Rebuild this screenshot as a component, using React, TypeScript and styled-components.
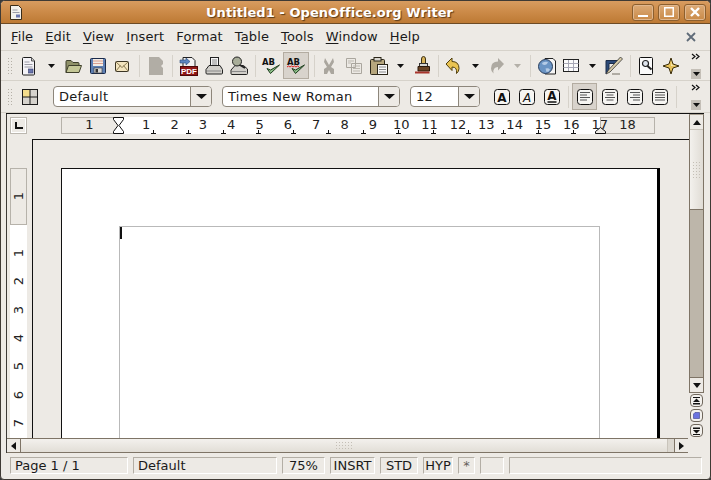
import React from 'react';
import styled, { createGlobalStyle } from 'styled-components';

const GlobalStyle = createGlobalStyle`
  html, body { margin: 0; padding: 0; background: #3a3a3a; overflow: hidden; }
  * { box-sizing: border-box; }
`;

const Window = styled.div`
  width: 711px;
  height: 480px;
  display: flex;
  flex-direction: column;
  background: #edeae5;
  border: 1px solid #3f3a34;
  border-radius: 5px 5px 4px 4px;
  overflow: hidden;
  font-family: 'DejaVu Sans', sans-serif;
  font-size: 13px;
  color: #1a1a1a;
`;

const TitleBar = styled.div`
  height: 23px;
  flex: none;
  display: flex;
  align-items: center;
  padding: 0 4px 0 8px;
  background: linear-gradient(#d89c60, #cd8c4a 45%, #bd7a34);
  border-bottom: 1px solid #6d4b25;
`;

const TitleText = styled.div`
  flex: 1;
  text-align: center;
  padding-left: 4px;
  font-weight: bold;
  font-size: 13px;
  letter-spacing: 0.06px;
  color: #fff;
  text-shadow: 1px 1px 1px #5a3a18;
  white-space: nowrap;
`;

const TitleButtons = styled.div`
  display: flex;
  gap: 4px;
`;

const TitleButton = styled.div`
  width: 22px;
  height: 17px;
  display: flex;
  align-items: center;
  justify-content: center;
  border: 1px solid #8c5f2e;
  border-radius: 3px;
  background: linear-gradient(#dcaa76, #c98a48);
  box-shadow: inset 0 0 0 1px #e0b78e;
`;

const MenuBar = styled.div`
  height: 27px;
  flex: none;
  display: flex;
  align-items: center;
  padding: 0 14px 1px 4px;
  border-bottom: 1px solid #d6d2ca;
`;

const MenuItem = styled.div`
  padding: 0 6px;
  letter-spacing: 0.12px;
  white-space: nowrap;
  u { text-underline-offset: 2px; }
`;

const MenuClose = styled.div`
  margin-left: auto;
  display: flex;
`;

const ToolBar = styled.div<{ $h: number }>`
  height: ${(p) => p.$h}px;
  flex: none;
  display: flex;
  align-items: center;
  padding-left: 6px;
  border-bottom: 1px solid #d6d2ca;
`;

const Grip = styled.div<{ $after: number }>`
  width: 6px;
  height: 18px;
  flex: none;
  margin-right: ${(p) => p.$after}px;
  background-image: radial-gradient(#b5b0a7 0.8px, transparent 0.9px);
  background-size: 3px 3px;
`;

const Slot = styled.div<{ $w: number; $active?: boolean }>`
  width: ${(p) => p.$w}px;
  height: 27px;
  flex: none;
  display: flex;
  align-items: center;
  justify-content: center;
  ${(p) => p.$active && 'background: #d8d3cc; border: 1px solid #b3aca1;'}
`;

const Separator = styled.div<{ $w: number }>`
  width: ${(p) => p.$w}px;
  height: 22px;
  flex: none;
  display: flex;
  justify-content: center;
  &::after {
    content: '';
    width: 1px;
    background: #d6d2ca;
  }
`;

const Overflow = styled.div`
  margin-left: auto;
  margin-right: 9px;
  width: 10px;
  height: 26px;
  flex: none;
  display: flex;
  flex-direction: column;
  justify-content: space-between;
  font-size: 0;
`;

const OverflowBottom = styled.div`
  height: 10px;
  display: flex;
  align-items: center;
  justify-content: center;
  background: #c4bfb7;
`;

const Combo = styled.div<{ $w: number; $before: number }>`
  width: ${(p) => p.$w}px;
  height: 21px;
  flex: none;
  margin-left: ${(p) => p.$before}px;
  display: flex;
  background: #fff;
  border: 1px solid #8d867b;
  border-radius: 4px;
  overflow: hidden;
`;

const ComboText = styled.div`
  flex: 1;
  padding: 2px 0 0 5px;
  letter-spacing: 0.02em;
  white-space: nowrap;
`;

const ComboButton = styled.div`
  width: 21px;
  flex: none;
  display: flex;
  align-items: center;
  justify-content: center;
  background: #edeae5;
  border-left: 1px solid #8d867b;
`;

const Workspace = styled.div`
  flex: 1;
  min-height: 0;
  display: flex;
  margin: 0 6px 0 5px;
  border-top: 1px solid #111;
`;

const MainColumn = styled.div`
  width: 683px;
  flex: none;
  display: flex;
  flex-direction: column;
  border-left: 1px solid #3d3a36;
`;

const RulerRow = styled.div`
  height: 25px;
  flex: none;
  display: flex;
  padding: 3px 0 0 3px;
`;

const CornerBox = styled.div`
  width: 17px;
  height: 17px;
  margin-right: 34px;
  display: flex;
  align-items: center;
  justify-content: center;
  border: 1px solid #bcb8b0;
  box-shadow: inset 0 0 0 1px #fff;
`;

const Ruler = styled.div`
  position: relative;
  width: 594px;
  height: 17px;
  display: flex;
  color: #222;
`;

const RulerGray = styled.div<{ $w: number }>`
  width: ${(p) => p.$w}px;
  flex: none;
  text-align: center;
  line-height: 14px;
  border: 1px solid #b6b2aa;
`;

const RulerWhite = styled.div`
  width: 482px;
  flex: none;
  display: flex;
  padding-left: 14px;
  background: #fff;
  line-height: 15px;
`;

const RulerNum = styled.div`
  width: 28.35px;
  flex: none;
  text-align: center;
`;

const TickLayer = styled.div`
  position: absolute;
  left: 57px;
  bottom: 0;
  display: flex;
  padding-left: 32px;
`;

const Tick = styled.div`
  position: relative;
  width: 35px;
  height: 4px;
  flex: none;
  &::before {
    content: '';
    position: absolute;
    left: 3px;
    top: 0;
    width: 1px;
    height: 4px;
    background: #111;
  }
  &::after {
    content: '';
    position: absolute;
    left: 1px;
    bottom: 0;
    width: 5px;
    height: 1px;
    background: #111;
  }
`;

const IndentLeft = styled.svg`
  position: absolute;
  left: 52px;
  top: 0;
`;

const IndentRight = styled.svg`
  position: absolute;
  left: 534px;
  top: 10px;
`;

const Body = styled.div`
  flex: 1;
  min-height: 0;
  display: flex;
  padding-left: 3px;
  overflow: hidden;
`;

const VRuler = styled.div`
  width: 17px;
  flex: none;
  margin-top: 29px;
  margin-right: 5px;
  background: #fff;
  color: #222;
`;

const VRulerGray = styled.div`
  height: 57px;
  display: flex;
  align-items: center;
  justify-content: center;
  background: #edeae5;
  border: 1px solid #b6b2aa;
`;

const VRulerNumbers = styled.div`
  padding-top: 14px;
`;

const VRulerNum = styled.div`
  height: 28.35px;
  display: flex;
  align-items: center;
  justify-content: center;
`;

const Rotated = styled.span`
  writing-mode: vertical-rl;
  transform: rotate(180deg);
  line-height: 15px;
`;

const DocFrame = styled.div`
  flex: 1;
  padding: 28px 0 0 28px;
  border-top: 1px solid #111;
  border-left: 1px solid #111;
`;

const Page = styled.div`
  width: 599px;
  height: 400px;
  padding: 57px 0 0 57px;
  background: #fff;
  border-top: 1px solid #111;
  border-left: 1px solid #111;
  border-right: 3px solid #000;
`;

const MarginBox = styled.div`
  width: 481px;
  height: 340px;
  border: 1px solid #b9b9b9;
`;

const Caret = styled.div`
  width: 2px;
  height: 12px;
  background: #111;
`;

const HScroll = styled.div`
  height: 15px;
  flex: none;
  display: flex;
  border-top: 1px solid #7e7466;
  border-bottom: 1px solid #7e7466;
  margin-right: 1px;
`;

const ScrollButton = styled.div`
  width: 14px;
  flex: none;
  display: flex;
  align-items: center;
  justify-content: center;
  background: #edeae5;
  border-right: 1px solid #7e7466;
`;

const ScrollButtonEnd = styled(ScrollButton)`
  border-right: 0;
  border-left: 1px solid #7e7466;
`;

const HThumb = styled.div`
  flex: 1;
  display: flex;
  align-items: center;
  justify-content: center;
  background: linear-gradient(#f3f1ed, #e2ded7);
  border-right: 1px solid #c9c4bb;
`;

const HTrackEnd = styled.div`
  width: 6px;
  flex: none;
  background: #dcd8d0;
`;

const Dots = styled.div<{ $w: number; $h: number }>`
  width: ${(p) => p.$w}px;
  height: ${(p) => p.$h}px;
  background-image: radial-gradient(#c4bfb6 0.7px, transparent 0.8px);
  background-size: 3px 3px;
`;

const VScroll = styled.div`
  width: 15px;
  flex: none;
  display: flex;
  flex-direction: column;
`;

const VScrollBar = styled.div`
  height: 279px;
  flex: none;
  display: flex;
  flex-direction: column;
  border: 1px solid #7e7466;
  border-top-color: #a79e90;
`;

const VButton = styled.div`
  height: 14px;
  flex: none;
  display: flex;
  align-items: center;
  justify-content: center;
  background: #edeae5;
`;

const VThumb = styled.div`
  height: 81px;
  flex: none;
  display: flex;
  align-items: center;
  justify-content: center;
  background: linear-gradient(90deg, #f3f1ed, #e0dcd5);
  border-top: 1px solid #c9c4bb;
  border-bottom: 1px solid #7e7466;
`;

const VTrough = styled.div`
  flex: 1;
  background: #bdb6aa;
  border-bottom: 1px solid #7e7466;
`;

const NavButtons = styled.div`
  display: flex;
  flex-direction: column;
  gap: 2px;
  margin: 1px 0 0 1px;
`;

const NavButton = styled.div`
  width: 13px;
  height: 13px;
  display: flex;
  align-items: center;
  justify-content: center;
  border: 1px solid #6f675c;
  border-radius: 4px;
  background: #f3f1ed;
`;

const StatusBar = styled.div`
  height: 26px;
  flex: none;
  display: flex;
  gap: 5px;
  padding: 4px 0 0 9px;
`;

const StatusCell = styled.div<{ $w: number; $center?: boolean }>`
  width: ${(p) => p.$w}px;
  height: 17px;
  flex: none;
  padding-left: ${(p) => (p.$center ? 0 : 4)}px;
  text-align: ${(p) => (p.$center ? 'center' : 'left')};
  line-height: 15px;
  white-space: nowrap;
  border: 1px solid;
  border-color: #b3aea5 #fff #fff #b3aea5;
`;

const StatusMark = styled.span`
  color: #66625b;
`;

const Svg = styled.svg`
  display: block;
  flex: none;
`;

const Arrow = ({ color = '#111' }: { color?: string }) => (
  <Svg width="7" height="4" viewBox="0 0 7 4">
    <path d="M0 0h7L3.500 4z" fill={color} />
  </Svg>
);

const ComboArrow = () => (
  <Svg width="11" height="5" viewBox="0 0 11 5">
    <path d="M0 0h11L5.500 5z" fill="#111" />
  </Svg>
);

const Icon = ({ children }: { children: React.ReactNode }) => (
  <Svg width="22" height="22" viewBox="0 0 22 22">
    {children}
  </Svg>
);

const NewDoc = () => (
  <Icon>
    <path d="M5.500 2.500h8l3 3.500v13q0 1-1 1h-10q-1 0-1-1v-15.500q0-1 1-1z" fill="#f4f3f7" stroke="#1d1d1d" />
    <path d="M13.500 2.500v3.500h3" fill="#ccc" stroke="#555" />
    <path d="M6.500 7h5M6.500 9.500h8M6.500 12h8" stroke="#9a9aa5" />
    <rect x="10.500" y="14" width="4.500" height="4" fill="#6a76ad" stroke="#333a6a" strokeWidth=".6" />
  </Icon>
);

const OpenFolder = () => (
  <Icon>
    <path d="M4 17.500V6.500q0-1 1-1h4l2 2h5q1 0 1 1v2" fill="#8f9168" stroke="#3e3f2b" />
    <path d="M4 17.500l2.500-7h13l-2.500 7z" fill="#c4c796" stroke="#3e3f2b" strokeLinejoin="round" />
  </Icon>
);

const Save = () => (
  <Icon>
    <rect x="3.500" y="3.500" width="15" height="15" rx="1" fill="#5d7fb3" stroke="#1a2a4a" />
    <rect x="6" y="4" width="10" height="7" fill="#f4ece4" />
    <path d="M6 6h10M6 8.500h10" stroke="#d0806c" strokeWidth=".7" />
    <rect x="7" y="13" width="8" height="5" fill="#d7d7d7" stroke="#333" strokeWidth=".6" />
    <rect x="8.500" y="14" width="2.500" height="3.500" fill="#333" />
  </Icon>
);

const Mail = () => (
  <Icon>
    <rect x="4.500" y="6.500" width="13" height="10" rx="1" fill="#f3e5bf" stroke="#3b3524" />
    <path d="M5 7l6 5.500L17 7M5 16l4.500-5.500M17 16l-4.500-5.500" fill="none" stroke="#8a7a52" />
  </Icon>
);

const DisabledDoc = () => (
  <Icon>
    <path d="M4 2h10l4 4v3l-2 2 2 2v7H4z" fill="#b1ada5" />
  </Icon>
);

const PdfDoc = () => (
  <Icon>
    <path d="M5 2.500h9l3 3v6H5z" fill="#f3f3f3" stroke="#222" />
    <path d="M2 5h6V3l4 3.500L8 10V8H2z" fill="#5d86c0" stroke="#2a4a7a" strokeWidth=".6" />
    <rect x="2.500" y="11.500" width="17" height="9" fill="#8f1616" stroke="#4c0808" />
    <text x="11" y="18.800" textAnchor="middle" fontFamily="'Liberation Sans', sans-serif" fontSize="8" fontWeight="700" fill="#fff">PDF</text>
  </Icon>
);

const Printer = () => (
  <Icon>
    <rect x="7.500" y="2.500" width="8" height="9" fill="#f5f5f5" stroke="#222" />
    <path d="M9 5h5M9 7h5M9 9h5" stroke="#888" />
    <path d="M6 10.500h11l2.500 4v3.500q0 1-1 1H4q-1 0-1-1v-3.500z" fill="#d0cec9" stroke="#222" />
    <path d="M4 16h14" stroke="#888" />
  </Icon>
);

const PrintPreview = () => (
  <Icon>
    <path d="M7 10.500h8.500l4 3.500v4.500q0 1-1 1H4q-1 0-1-1v-3.500z" fill="#d0cec9" stroke="#222" />
    <path d="M4 16.500h14" stroke="#888" />
    <circle cx="9" cy="6.500" r="4.500" fill="#a8ad99" stroke="#222" />
    <path d="M12 10l5 3" stroke="#222" strokeWidth="2" />
  </Icon>
);

const Spell = ({ wavy }: { wavy?: boolean }) => (
  <Icon>
    <text x="2" y="9.500" fontFamily="'DejaVu Sans', sans-serif" fontSize="8.500" fontWeight="700" fill="#111">AB</text>
    {wavy && <path d="M2 12l1.500-1 1.500 1 1.500-1 1.500 1 1.500-1 1.500 1 1.500-1 1.500 1" fill="none" stroke="#d22" />}
    <path d="M7 13.500l3.500 5L19.500 10l-9 5z" fill="#8fc08a" stroke="#1c3c1c" strokeLinejoin="round" />
  </Icon>
);

const Cut = () => (
  <Icon>
    <path d="M7 3l4 7 4-7 1 4-3 5 3 2v5h-3l-2-4-2 4H6v-5l3-2-3-5z" fill="#aaa69e" />
  </Icon>
);

const Copy = () => (
  <Icon>
    <path d="M3.500 3.500h9v9h-9zM8.500 8.500h10v10h-10z" fill="#ece9e4" stroke="#aaa69e" />
    <path d="M5 6h6M5 8h3M10 11h7M10 13.500h7M10 16h7" stroke="#bdb9b1" />
  </Icon>
);

const Paste = () => (
  <Icon>
    <rect x="2.500" y="4.500" width="14" height="15" rx="1" fill="#b6a67d" stroke="#2b2619" />
    <rect x="6" y="2.500" width="7" height="3.500" fill="#d8d6cf" stroke="#2b2619" />
    <rect x="9.500" y="9.500" width="10" height="10" fill="#f8f8f8" stroke="#2b2619" />
    <path d="M11 12h7M11 14.500h7M11 17h7" stroke="#888" />
  </Icon>
);

const Brush = () => (
  <Icon>
    <path d="M9.500 9V4q0-2.500 2-2.500t2 2.500v5z" fill="#d9b45a" stroke="#3b2f10" />
    <rect x="7.500" y="8.500" width="8" height="3" fill="#d7d7d2" stroke="#333" />
    <path d="M6 11.500h11.500v4.500H6z" fill="#6a4526" stroke="#2c1a0c" />
    <path d="M3 17.500h14.500" stroke="#a8352c" strokeWidth="2" />
  </Icon>
);

const UndoArrow = () => (
  <Icon>
    <path d="M4 9l6-6v3.500q7 0 7 7 0 3-2.500 5 1-6.500-4.500-6.500v3.500z" fill="#e9c352" stroke="#4f3e0c" strokeLinejoin="round" />
  </Icon>
);

const RedoArrow = () => (
  <Icon>
    <path d="M18 9l-6-6v3.500q-7 0-7 7 0 3 2.500 5-1-6.500 4.500-6.500v3.500z" fill="#aeaaa2" />
  </Icon>
);

const Globe = () => (
  <Icon>
    <path d="M9 3.500h8l2.500 2.500v13H9z" fill="#f5f5f5" stroke="#222" />
    <circle cx="9.500" cy="11.500" r="7" fill="#6a94c4" stroke="#2a3f5e" />
    <path d="M6 8q3-2 6-1-1 3-3.500 3T6 8zM9.500 13.500q3-1 4.500 1-1 2.500-3.500 2.500z" fill="#b4cbe6" />
  </Icon>
);

const TableGrid = () => (
  <Icon>
    <rect x="3.500" y="4.500" width="15" height="12" fill="#fbfbfb" stroke="#222" />
    <path d="M3.500 8.500h15M3.500 12.500h15M8.500 5v11M13.500 5v11" stroke="#a7a7b5" />
  </Icon>
);

const DrawPencil = () => (
  <Icon>
    <path d="M3 5.500h13l-1 3H6v7l-3 3z" fill="#2c4a78" stroke="#1b2c48" />
    <path d="M3 19l4-2L19.500 4l-2-2L5.500 15z" fill="#d6cba8" stroke="#333" strokeWidth=".8" />
    <path d="M9 19h8" stroke="#b0aca4" strokeWidth="2" />
  </Icon>
);

const FindDoc = () => (
  <Icon>
    <rect x="4.500" y="2.500" width="13" height="17" rx="1" fill="#fafafa" stroke="#111" />
    <circle cx="10.500" cy="8.500" r="3" fill="#dfe5ee" stroke="#222" strokeWidth="1.200" />
    <path d="M12.500 11l4 3.500" stroke="#222" strokeWidth="2" />
  </Icon>
);

const NavigatorStar = () => (
  <Icon>
    <path d="M11 3l2 6 6 2-6 2-2 6-2-6-6-2 6-2z" fill="#e8c25a" stroke="#3a2d0a" strokeLinejoin="round" />
    <path d="M11 6l1 4 4 1-5 0z" fill="#f7e8b0" />
  </Icon>
);

const StylesGrid = () => (
  <Icon>
    <rect x="3.500" y="3.500" width="15" height="15" fill="#d6d3cd" stroke="#1b1b1b" />
    <rect x="4" y="4" width="7" height="7" fill="#f4dd8c" />
    <path d="M11 3.500v15M3.500 11h15" stroke="#1b1b1b" />
  </Icon>
);

const LetterStyled = styled.text<{ $weight: number; $italic?: boolean }>`
  font-family: 'DejaVu Sans', sans-serif;
  font-size: 12px;
  font-weight: ${(p) => p.$weight};
  font-style: ${(p) => (p.$italic ? 'italic' : 'normal')};
  fill: #111;
`;

const LetterButton = ({ weight, italic, under }: { weight: number; italic?: boolean; under?: boolean }) => (
  <Icon>
    <rect x="3.500" y="3.500" width="15" height="15" rx="3" fill="#f6f5f2" stroke="#111" />
    <LetterStyled x="11" y={under ? 14 : 15.500} textAnchor="middle" $weight={weight} $italic={italic}>A</LetterStyled>
    {under && <path d="M6.500 16h9" stroke="#111" strokeWidth="1.300" />}
  </Icon>
);

const AlignButton = ({ lines }: { lines: string }) => (
  <Icon>
    <rect x="3.500" y="3.500" width="15" height="15" rx="3" fill="#f6f5f2" stroke="#111" />
    <path d={lines} stroke="#555" fill="none" />
  </Icon>
);

const tabTicks = Array.from({ length: 13 }, (_, i) => i);
const hNumbers = Array.from({ length: 17 }, (_, i) => i + 1);
const vNumbers = [1, 2, 3, 4, 5, 6, 7];

const OverflowMark = () => (
  <>
    <Svg width="10" height="7" viewBox="0 0 10 7">
      <path d="M1 1l3 2.500L1 6M5 1l3 2.500L5 6" fill="none" stroke="#111" strokeWidth="1.200" />
    </Svg>
    <OverflowBottom>
      <Arrow />
    </OverflowBottom>
  </>
);

const App = () => (
  <>
    <GlobalStyle />
    <Window>
      <TitleBar>
        <Svg width="14" height="17" viewBox="0 0 14 17">
          <path d="M1.500 1.500h8l3 3v11h-11z" fill="#f3f1ec" stroke="#3a2c18" />
          <path d="M3.500 6h5M3.500 8.500h7" stroke="#9a9aa5" />
          <rect x="7" y="10.500" width="4" height="3" fill="#6a76ad" />
        </Svg>
        <TitleText>Untitled1 - OpenOffice.org Writer</TitleText>
        <TitleButtons>
          <TitleButton>
            <Svg width="10" height="10" viewBox="0 0 10 10"><path d="M0 8h10v2H0z" fill="#fff" /></Svg>
          </TitleButton>
          <TitleButton>
            <Svg width="10" height="10" viewBox="0 0 10 10"><rect x=".75" y=".75" width="8.500" height="8.500" fill="none" stroke="#fff" strokeWidth="1.500" /></Svg>
          </TitleButton>
          <TitleButton>
            <Svg width="10" height="10" viewBox="0 0 10 10"><path d="M1 1l8 8M9 1l-8 8" stroke="#fff" strokeWidth="2.400" /></Svg>
          </TitleButton>
        </TitleButtons>
      </TitleBar>

      <MenuBar>
        <MenuItem><u>F</u>ile</MenuItem>
        <MenuItem><u>E</u>dit</MenuItem>
        <MenuItem><u>V</u>iew</MenuItem>
        <MenuItem><u>I</u>nsert</MenuItem>
        <MenuItem>F<u>o</u>rmat</MenuItem>
        <MenuItem>T<u>a</u>ble</MenuItem>
        <MenuItem><u>T</u>ools</MenuItem>
        <MenuItem><u>W</u>indow</MenuItem>
        <MenuItem><u>H</u>elp</MenuItem>
        <MenuClose>
          <Svg width="10" height="10" viewBox="0 0 10 10">
            <path d="M1 1l8 8M9 1l-8 8" stroke="#5f6b78" strokeWidth="1.800" />
          </Svg>
        </MenuClose>
      </MenuBar>

      <ToolBar $h={30}>
        <Grip $after={4} />
        <Slot $w={24}><NewDoc /></Slot>
        <Slot $w={20}><Arrow /></Slot>
        <Slot $w={24}><OpenFolder /></Slot>
        <Slot $w={26}><Save /></Slot>
        <Slot $w={22}><Mail /></Slot>
        <Separator $w={12} />
        <Slot $w={22}><DisabledDoc /></Slot>
        <Separator $w={10} />
        <Slot $w={24}><PdfDoc /></Slot>
        <Slot $w={26}><Printer /></Slot>
        <Slot $w={24}><PrintPreview /></Slot>
        <Separator $w={8} />
        <Slot $w={24}><Spell /></Slot>
        <Slot $w={26} $active><Spell wavy /></Slot>
        <Separator $w={10} />
        <Slot $w={20}><Cut /></Slot>
        <Slot $w={30}><Copy /></Slot>
        <Slot $w={20}><Paste /></Slot>
        <Slot $w={22}><Arrow /></Slot>
        <Slot $w={24}><Brush /></Slot>
        <Separator $w={6} />
        <Slot $w={24}><UndoArrow /></Slot>
        <Slot $w={20}><Arrow /></Slot>
        <Slot $w={24}><RedoArrow /></Slot>
        <Slot $w={16}><Arrow color="#b4b0a8" /></Slot>
        <Separator $w={10} />
        <Slot $w={24}><Globe /></Slot>
        <Slot $w={24}><TableGrid /></Slot>
        <Slot $w={18}><Arrow /></Slot>
        <Slot $w={26}><DrawPencil /></Slot>
        <Separator $w={6} />
        <Slot $w={26}><FindDoc /></Slot>
        <Slot $w={24}><NavigatorStar /></Slot>
        <Overflow><OverflowMark /></Overflow>
      </ToolBar>

      <ToolBar $h={32}>
        <Grip $after={5} />
        <Slot $w={24}><StylesGrid /></Slot>
        <Combo $w={159} $before={11}>
          <ComboText>Default</ComboText>
          <ComboButton><ComboArrow /></ComboButton>
        </Combo>
        <Combo $w={178} $before={10}>
          <ComboText>Times New Roman</ComboText>
          <ComboButton><ComboArrow /></ComboButton>
        </Combo>
        <Combo $w={70} $before={10}>
          <ComboText>12</ComboText>
          <ComboButton><ComboArrow /></ComboButton>
        </Combo>
        <Slot $w={9} />
        <Slot $w={25}><LetterButton weight={700} /></Slot>
        <Slot $w={25}><LetterButton weight={400} italic /></Slot>
        <Slot $w={25}><LetterButton weight={700} under /></Slot>
        <Separator $w={8} />
        <Slot $w={25} $active>
          <AlignButton lines="M6 6.500h10M6 9h7M6 11.500h10M6 14h7" />
        </Slot>
        <Slot $w={25}><AlignButton lines="M6 6.500h10M7.500 9h7M6 11.500h10M7.500 14h7" /></Slot>
        <Slot $w={25}><AlignButton lines="M6 6.500h10M9 9h7M6 11.500h10M9 14h7" /></Slot>
        <Slot $w={25}><AlignButton lines="M6 6.500h10M6 9h10M6 11.500h10M6 14h10" /></Slot>
        <Separator $w={8} />
        <Overflow><OverflowMark /></Overflow>
      </ToolBar>

      <Workspace>
        <MainColumn>
          <RulerRow>
            <CornerBox>
              <Svg width="8" height="7" viewBox="0 0 8 7"><path d="M0 0h2v5h6v2H0z" fill="#111" /></Svg>
            </CornerBox>
            <Ruler>
              <RulerGray $w={57}>1</RulerGray>
              <RulerWhite>
                {hNumbers.map((n) => (
                  <RulerNum key={n}>{n}</RulerNum>
                ))}
              </RulerWhite>
              <RulerGray $w={55}>18</RulerGray>
              <TickLayer>
                {tabTicks.map((n) => (
                  <Tick key={n} />
                ))}
              </TickLayer>
              <IndentLeft width="11" height="17" viewBox="0 0 11 17">
                <path d="M.5.500h10v2L6 8.500l4.500 6v2H.500v-2L5 8.500.500 2.500z" fill="#fff" stroke="#111" />
              </IndentLeft>
              <IndentRight width="11" height="7" viewBox="0 0 11 7">
                <path d="M5.500.500l5 4v2H.500v-2z" fill="#edeae5" stroke="#111" />
              </IndentRight>
            </Ruler>
          </RulerRow>

          <Body>
            <VRuler>
              <VRulerGray><Rotated>1</Rotated></VRulerGray>
              <VRulerNumbers>
                {vNumbers.map((n) => (
                  <VRulerNum key={n}><Rotated>{n}</Rotated></VRulerNum>
                ))}
              </VRulerNumbers>
            </VRuler>
            <DocFrame>
              <Page>
                <MarginBox>
                  <Caret />
                </MarginBox>
              </Page>
            </DocFrame>
          </Body>

          <HScroll>
            <ScrollButton>
              <Svg width="5" height="8" viewBox="0 0 5 8"><path d="M5 0v8L0 4z" fill="#111" /></Svg>
            </ScrollButton>
            <HThumb><Dots $w={18} $h={9} /></HThumb>
            <HTrackEnd />
            <ScrollButtonEnd>
              <Svg width="5" height="8" viewBox="0 0 5 8"><path d="M0 0v8l5-4z" fill="#111" /></Svg>
            </ScrollButtonEnd>
          </HScroll>
        </MainColumn>

        <VScroll>
          <VScrollBar>
            <VButton>
              <Svg width="8" height="5" viewBox="0 0 8 5"><path d="M0 5h8L4 0z" fill="#111" /></Svg>
            </VButton>
            <VThumb><Dots $w={9} $h={18} /></VThumb>
            <VTrough />
            <VButton>
              <Svg width="8" height="5" viewBox="0 0 8 5"><path d="M0 0h8L4 5z" fill="#111" /></Svg>
            </VButton>
          </VScrollBar>
          <NavButtons>
            <NavButton>
              <Svg width="7" height="8" viewBox="0 0 7 8"><path d="M0 0h7v1H0zM3.500 1.500L7 5H0zM0 6h7v1.500H0z" fill="#111" /></Svg>
            </NavButton>
            <NavButton>
              <Svg width="7" height="7" viewBox="0 0 7 7"><path d="M2 .5h4.500v6H.5V2z" fill="#6a72e0" stroke="#3a3f8a" strokeWidth=".6" /></Svg>
            </NavButton>
            <NavButton>
              <Svg width="7" height="8" viewBox="0 0 7 8"><path d="M0 .5h7V2H0zM0 3h7L3.500 6.500zM0 7h7v1H0z" fill="#111" /></Svg>
            </NavButton>
          </NavButtons>
        </VScroll>
      </Workspace>

      <StatusBar>
        <StatusCell $w={118}>Page 1 / 1</StatusCell>
        <StatusCell $w={144}>Default</StatusCell>
        <StatusCell $w={43} $center>75%</StatusCell>
        <StatusCell $w={45} $center>INSRT</StatusCell>
        <StatusCell $w={38} $center>STD</StatusCell>
        <StatusCell $w={30} $center>HYP</StatusCell>
        <StatusCell $w={17} $center><StatusMark>*</StatusMark></StatusCell>
        <StatusCell $w={24} />
        <StatusCell $w={193} />
      </StatusBar>
    </Window>
  </>
);

export default App;
